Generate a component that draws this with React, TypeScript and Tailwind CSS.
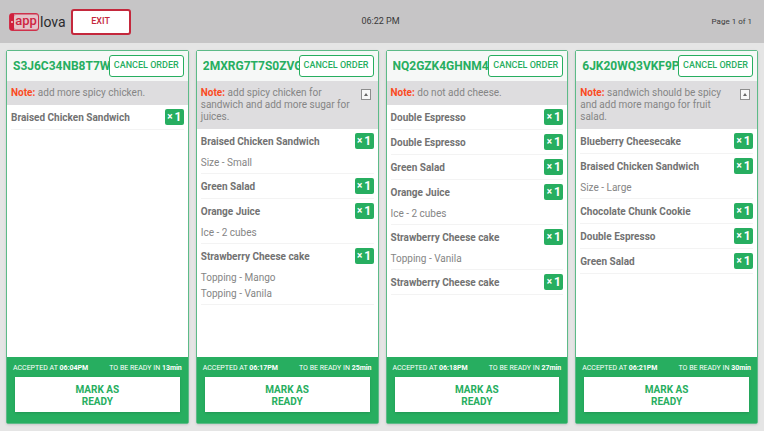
import React, { useState } from "react";

type Item = { name: string; qty: number; options?: string[] };

type Order = {
  id: string;
  note: string;
  long?: boolean;
  items: Item[];
  acceptedAt: string;
  readyIn: string;
};

const orders: Order[] = [
  {
    id: "S3J6C34NB8T7W",
    note: "add more spicy chicken.",
    items: [{ name: "Braised Chicken Sandwich", qty: 1 }],
    acceptedAt: "06:04PM",
    readyIn: "13min",
  },
  {
    id: "2MXRG7T7S0ZVG",
    note: "add spicy chicken for sandwich and add more sugar for juices.",
    long: true,
    items: [
      { name: "Braised Chicken Sandwich", qty: 1, options: ["Size - Small"] },
      { name: "Green Salad", qty: 1 },
      { name: "Orange Juice", qty: 1, options: ["Ice - 2 cubes"] },
      {
        name: "Strawberry Cheese cake",
        qty: 1,
        options: ["Topping - Mango", "Topping - Vanila"],
      },
    ],
    acceptedAt: "06:17PM",
    readyIn: "25min",
  },
  {
    id: "NQ2GZK4GHNM4G",
    note: "do not add cheese.",
    items: [
      { name: "Double Espresso", qty: 1 },
      { name: "Double Espresso", qty: 1 },
      { name: "Green Salad", qty: 1 },
      { name: "Orange Juice", qty: 1, options: ["Ice - 2 cubes"] },
      { name: "Strawberry Cheese cake", qty: 1, options: ["Topping - Vanila"] },
      { name: "Strawberry Cheese cake", qty: 1 },
    ],
    acceptedAt: "06:18PM",
    readyIn: "27min",
  },
  {
    id: "6JK20WQ3VKF9P",
    note: "sandwich should be spicy and add more mango for fruit salad.",
    long: true,
    items: [
      { name: "Blueberry Cheesecake", qty: 1 },
      { name: "Braised Chicken Sandwich", qty: 1, options: ["Size - Large"] },
      { name: "Chocolate Chunk Cookie", qty: 1 },
      { name: "Double Espresso", qty: 1 },
      { name: "Green Salad", qty: 1 },
    ],
    acceptedAt: "06:21PM",
    readyIn: "30min",
  },
];

const Logo: React.FC = () => (
  <div className="flex items-center">
    <div className="flex h-[18px] w-[30px] items-center rounded-[3px] border border-[#d0304a] bg-[#d4798a]">
      <svg className="h-full w-1 shrink-0" viewBox="0 0 4 16" aria-hidden="true">
        <path d="M0 0h4v16H0z" fill="#d0203c" />
        <circle cx="2" cy="8" r="1" fill="#f3d5da" />
      </svg>
      <span className="flex h-[14px] flex-1 items-center justify-center rounded-[2px] bg-[#e3c3c9] pb-[3px] text-[13px] leading-none font-medium text-[#cf2441]">
        app
      </span>
    </div>
    <span className="pl-px text-[14px] leading-[18px] text-[#2b2a2d]">lova</span>
  </div>
);

const OrderCard: React.FC<{ order: Order }> = ({ order }) => {
  const [open, setOpen] = useState(true);

  return (
    <article className="flex min-w-0 flex-col rounded-[2px] border border-[#5dbb88] bg-white shadow-sm">
      <header className="flex h-[30px] items-center bg-[#f6f8f7] pr-1 pl-1.5">
        <h2 className="min-w-0 flex-1 overflow-hidden text-[12px] font-bold whitespace-nowrap text-[#27ae60]">
          {order.id}
        </h2>
        <button className="h-[22px] w-[75px] shrink-0 rounded-[3px] border border-[#27ae60] bg-white text-[9px] font-medium whitespace-nowrap text-[#27ae60]">
          CANCEL ORDER
        </button>
      </header>

      <div className="flex items-start justify-between bg-[#dedddf] py-1.5 pr-[7px] pl-1">
        <p
          className={
            open
              ? "max-w-[152px] text-[10px] leading-3 text-[#858585]"
              : "max-w-[152px] truncate text-[10px] leading-3 text-[#858585]"
          }
        >
          <span className="font-bold text-[#fb4a1e]">Note:</span> {order.note}
        </p>
        {order.long && (
          <button
            aria-label="Toggle note"
            aria-expanded={open}
            onClick={() => setOpen(!open)}
            className="mt-[2px] flex h-[11px] w-[10px] shrink-0 items-center justify-center border border-[#8d8d8d] bg-[#f7f7f7]"
          >
            <svg className="h-[3px] w-1" viewBox="0 0 4 3" aria-hidden="true">
              <path d="M2 0l2 3H0z" fill="#666" />
            </svg>
          </button>
        )}
      </div>

      <ul className="flex-1">
        {order.items.map((item, index) => (
          <li key={index} className="mx-1 border-b border-[#f3f3f3]">
            <div className="flex h-6 items-center justify-between">
              <span className="text-[10px] font-bold text-[#727272]">
                {item.name}
              </span>
              <span className="flex h-4 w-[19px] items-center justify-center gap-[2px] rounded-[2px] bg-[#27ae60] font-bold text-white">
                <span className="text-[10px] leading-none">×</span>
                <span className="text-[12px] leading-none">{item.qty}</span>
              </span>
            </div>
            {item.options && (
              <ul className="py-[2px] text-[10px] leading-4 text-[#858585]">
                {item.options.map((option) => (
                  <li key={option}>{option}</li>
                ))}
              </ul>
            )}
          </li>
        ))}
      </ul>

      <footer className="bg-[#27ae60] px-1.5 pt-1.5 pb-[11px]">
        <div className="flex justify-between text-[7px] leading-[10px] whitespace-nowrap text-white">
          <span>
            ACCEPTED AT <b>{order.acceptedAt}</b>
          </span>
          <span>
            TO BE READY IN <b>{order.readyIn}</b>
          </span>
        </div>
        <div className="px-0.5 pt-1">
          <button className="flex h-[35px] w-full items-center justify-center bg-white pt-[2px] text-[10px] leading-3 font-bold text-[#27ae60] shadow-sm">
            <span className="w-14">MARK AS READY</span>
          </button>
        </div>
      </footer>
    </article>
  );
};

const App: React.FC = () => {
  return (
    <div className="flex min-h-screen flex-col bg-[#e5e5e5] font-['Roboto',sans-serif]">
      <header className="grid h-[43px] grid-cols-3 items-center bg-[#c6c5c6] pt-px pr-3 pl-[9px] text-[#3a3a3a]">
        <div className="flex items-center gap-[5px]">
          <Logo />
          <button className="h-[26px] w-[60px] rounded-[3px] border-2 border-[#c4283c] bg-white text-[9px] font-medium text-[#c4283c]">
            EXIT
          </button>
        </div>
        <time className="text-center text-[9px]">06:22 PM</time>
        <span className="text-right text-[8px]">Page 1 of 1</span>
      </header>

      <main className="grid flex-1 grid-cols-4 gap-[7px] px-1.5 py-[7px]">
        {orders.map((order) => (
          <OrderCard key={order.id} order={order} />
        ))}
      </main>
    </div>
  );
};

export default App;
